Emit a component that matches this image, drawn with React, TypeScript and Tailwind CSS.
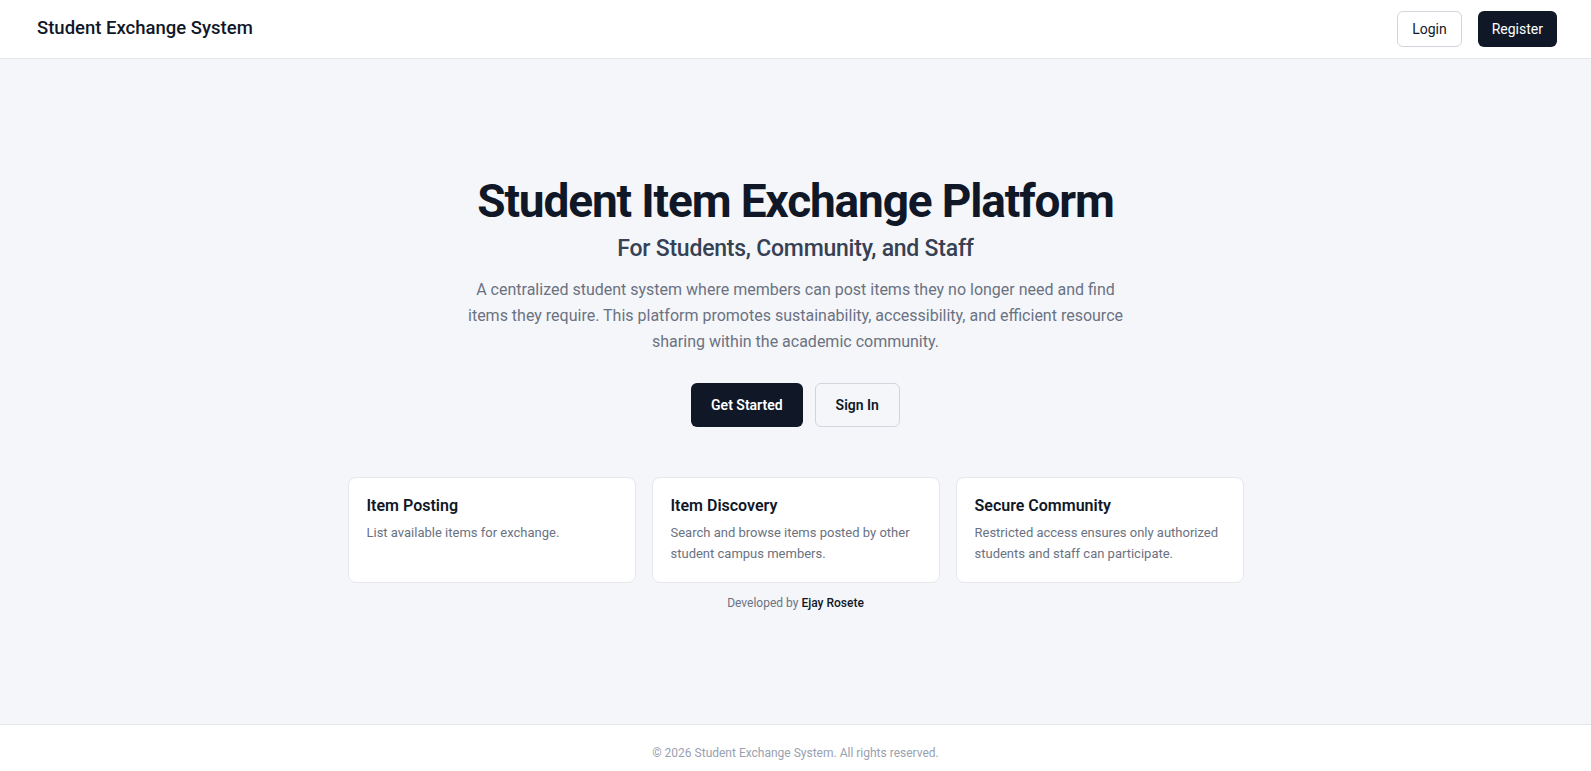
import React from 'react';

const features = [
  { title: 'Item Posting', text: 'List available items for exchange.' },
  { title: 'Item Discovery', text: 'Search and browse items posted by other student campus members.' },
  { title: 'Secure Community', text: 'Restricted access ensures only authorized students and staff can participate.' },
];

export default function App() {
  return (
    <div className="flex flex-col bg-[#f5f6fa] font-['Roboto',sans-serif] text-gray-900">
      <header className="h-[59px] bg-white border-b border-gray-200 flex items-center justify-between px-[34px]">
        <span className="text-[18.5px] font-medium pl-[3px]">Student Exchange System</span>
        <nav className="flex items-center gap-4">
          <button className="h-9 px-3.5 text-sm rounded-md border border-gray-300 bg-white">Login</button>
          <button className="h-9 px-3.5 text-sm rounded-md bg-gray-900 text-white">Register</button>
        </nav>
      </header>

      <main className="h-[665px] flex items-center justify-center px-6 pt-1">
        <div className="flex flex-col items-center text-center w-full max-w-4xl">
          <h1 className="text-[46px] leading-[48px] font-bold tracking-tight">Student Item Exchange Platform</h1>
          <h2 className="mt-2 text-[23px] leading-8 font-medium tracking-[-0.01em] text-gray-700">
            For Students, Community, and Staff
          </h2>
          <p className="mt-3 max-w-2xl text-base leading-relaxed text-gray-500">
            A centralized student system where members can post items they no longer need and find items they require.
            This platform promotes sustainability, accessibility, and efficient resource sharing within the academic
            community.
          </p>

          <div className="mt-7 flex gap-3">
            <button className="h-11 px-5 rounded-md bg-gray-900 text-white text-sm font-semibold">Get Started</button>
            <button className="h-11 px-5 rounded-md border border-gray-300 text-sm font-semibold">Sign In</button>
          </div>

          <div className="mt-[50px] grid grid-cols-3 gap-4 w-full text-left">
            {features.map((f) => (
              <div key={f.title} className="bg-white border border-gray-200 rounded-lg px-[18px] py-4 h-[106px]">
                <h3 className="text-base font-semibold">{f.title}</h3>
                <p className="mt-1 text-[13px] leading-[21px] text-gray-500">{f.text}</p>
              </div>
            ))}
          </div>

          <p className="mt-3 text-xs text-gray-500">
            Developed by <span className="font-medium text-gray-900">Ejay Rosete</span>
          </p>
        </div>
      </main>

      <footer className="bg-white border-t border-gray-200 pt-5 pb-6 text-center text-xs text-gray-400">
        © 2026 Student Exchange System. All rights reserved.
      </footer>
    </div>
  );
}
